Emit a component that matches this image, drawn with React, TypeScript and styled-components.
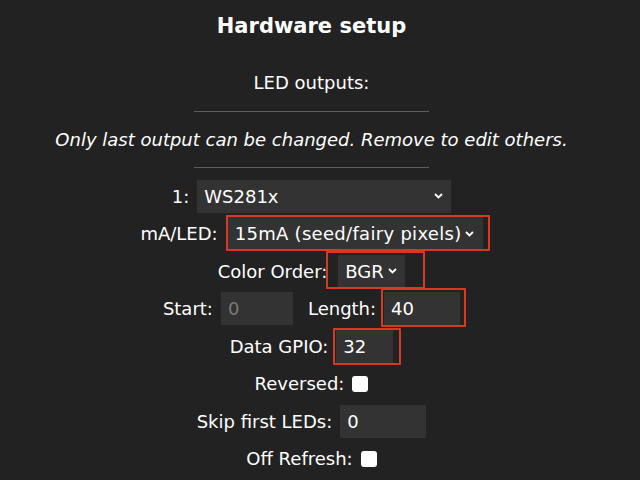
import styled, { createGlobalStyle } from "styled-components";

const red = "#d9391f";

const GlobalStyle = createGlobalStyle`
  html, body {
    margin: 0;
    padding: 0;
    background: #222;
    color: #fff;
    font-family: "DejaVu Sans", Verdana, sans-serif;
  }
`;

export default function App() {
  return (
    <>
      <GlobalStyle />
      <Page>
        <Title>Hardware setup</Title>
        <Caption>LED outputs:</Caption>
        <Rule />
        <Note>Only last output can be changed. Remove to edit others.</Note>
        <Rule $after />

        <Row $first>
          <Label>1:</Label>
          <Select $w={254}>
            <span>WS281x</span>
            <Chevron />
          </Select>
        </Row>

        <Row>
          <Label $right={10}>mA/LED:</Label>
          <Mark $inset="-2px -7px -1px -2px">
            <Select $w={255} $pad={9}>
              <SelectText $spread>15mA (seed/fairy pixels)</SelectText>
              <Chevron />
            </Select>
          </Mark>
        </Row>

        <Row>
          <Label $right={11}>Color Order:</Label>
          <Mark $inset="-4px -20px -1px -12px">
            <Select $w={67}>
              <span>BGR</span>
              <Chevron />
            </Select>
          </Mark>
        </Row>

        <Row>
          <Label>Start:</Label>
          <Input value="0" disabled readOnly $w={72} />
          <Label $gap={15}>Length:</Label>
          <Mark $inset="-4px -6px -2px -3px">
            <Input value="40" readOnly $w={76} />
          </Mark>
        </Row>

        <Row>
          <Label>Data GPIO:</Label>
          <Mark $inset="-2px -8px -2px -3px">
            <Input value="32" readOnly $w={57} />
          </Mark>
        </Row>

        <Row>
          <Label>Reversed:</Label>
          <Check type="checkbox" readOnly />
        </Row>

        <Row>
          <Label>Skip first LEDs:</Label>
          <Input value="0" readOnly $w={86} />
        </Row>

        <Row>
          <Label>Off Refresh:</Label>
          <Check type="checkbox" readOnly />
        </Row>
      </Page>
    </>
  );
}

function Chevron() {
  return (
    <svg width="9" height="6" viewBox="0 0 9 6">
      <polyline points="1,1 4.5,4.5 8,1" fill="none" stroke="#fff" strokeWidth="1.8" />
    </svg>
  );
}

/* ---------------- Styled Components ---------------- */

const Page = styled.div`
  width: 623px;
  height: 480px;
  overflow: hidden;
  display: flex;
  flex-direction: column;
  align-items: center;
`;

const Title = styled.h2`
  margin: 14px 0 0;
  font-size: 21px;
  line-height: 25px;
  font-weight: bold;
`;

const Caption = styled.div`
  margin-top: 33px;
  font-size: 18px;
  line-height: 22px;
`;

const Rule = styled.div<{ $after?: boolean }>`
  width: 235px;
  height: 1px;
  background: #5c5c5c;
  margin-top: ${({ $after }) => ($after ? "16.5px" : "17px")};
`;

const Note = styled.div`
  margin-top: 16.5px;
  font-size: 18px;
  line-height: 22px;
  font-style: italic;
`;

const Row = styled.div<{ $first?: boolean }>`
  height: 37.5px;
  margin-top: ${({ $first }) => ($first ? "9.25px" : "0")};
  display: flex;
  align-items: center;
  justify-content: center;
  font-size: 18px;
`;

const Label = styled.span<{ $gap?: number; $right?: number }>`
  margin-left: ${({ $gap }) => ($gap ? `${$gap}px` : "0")};
  margin-right: ${({ $right }) => $right ?? 8}px;
  white-space: nowrap;
`;

const Mark = styled.span<{ $inset: string }>`
  position: relative;
  display: inline-flex;

  &::after {
    content: "";
    position: absolute;
    inset: ${({ $inset }) => $inset};
    border: 2px solid ${red};
    border-radius: 1px;
    pointer-events: none;
  }
`;

const Select = styled.div<{ $w: number; $pad?: number }>`
  width: ${({ $w }) => $w}px;
  height: 33px;
  box-sizing: border-box;
  padding: 0 ${({ $pad }) => $pad ?? 8}px 0 7px;
  background: #333;
  display: flex;
  align-items: center;
  justify-content: space-between;
  font-size: 18px;
  white-space: nowrap;
`;

const SelectText = styled.span<{ $spread?: boolean }>`
  letter-spacing: ${({ $spread }) => ($spread ? "0.3px" : "0")};
`;

const Input = styled.input<{ $w: number }>`
  width: ${({ $w }) => $w}px;
  height: 33px;
  box-sizing: border-box;
  padding: 0 7px;
  border: none;
  outline: none;
  background: #333;
  color: #fff;
  font-family: "DejaVu Sans", Verdana, sans-serif;
  font-size: 18px;

  &:disabled {
    color: #7a7a7a;
  }
`;

const Check = styled.input`
  appearance: none;
  width: 16px;
  height: 16px;
  margin: 0;
  background: #fff;
  border-radius: 3px;
`;
